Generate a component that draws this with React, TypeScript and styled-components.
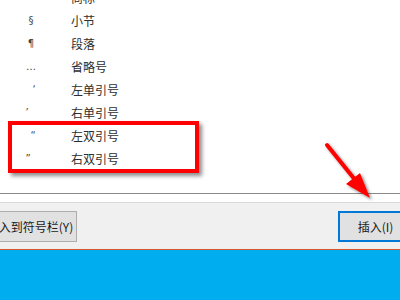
import React from "react";
import styled, { createGlobalStyle } from "styled-components";

const Global = createGlobalStyle`
  html, body { margin: 0; padding: 0; background: #ffffff; }
  body { font-family: "Noto Sans CJK SC", "Noto Sans", sans-serif; }
`;

const Page = styled.div`
  position: relative;
  width: 400px;
  height: 300px;
  overflow: hidden;
  display: flex;
  flex-direction: column;
  background: #ffffff;
`;

const DialogBody = styled.div`
  background: #ffffff;
  padding-bottom: 8px;
`;

const ListPane = styled.div`
  height: 193px;
  overflow: hidden;
  border-bottom: 1px solid #8a8a8a;
`;

const Rows = styled.div`
  margin-top: -14px;
  display: flex;
  flex-direction: column;
`;

const Row = styled.div`
  display: grid;
  grid-template-columns: 62px 1fr;
  column-gap: 9px;
  height: 23px;
  align-items: center;
  font-size: 12px;
  color: #2e2e2e;
`;

const Sym = styled.span<{ $shift: number }>`
  text-align: center;
  font-family: "DejaVu Sans", "Noto Sans", sans-serif;
  font-size: 10px;
  color: #444444;
  transform: translateX(${(p) => p.$shift}px);
`;

const Name = styled.span`
  letter-spacing: 0;
`;

const ButtonBar = styled.div`
  height: 46px;
  border-top: 1px solid #d9d9d9;
  background: #f0f0f0;
  display: flex;
  align-items: center;
  justify-content: space-between;
`;

const Button = styled.button<{ $primary?: boolean; $width: number }>`
  box-sizing: border-box;
  width: ${(p) => p.$width}px;
  flex: none;
  height: 31px;
  margin-top: 1px;
  padding: 0;
  font-family: "Noto Sans CJK SC", "Noto Sans", sans-serif;
  font-size: 12px;
  color: #1a1a1a;
  background: #e1e1e1;
  border: ${(p) => (p.$primary ? "2px solid #0078d7" : "1px solid #adadad")};
  text-align: center;
  white-space: nowrap;
`;

const LeftButton = styled(Button)`
  margin-left: -17px;
`;

const RightButton = styled(Button)`
  margin-right: -13px;
`;

const Taskbar = styled.div`
  flex: 1;
  border-top: 1px solid #d9572c;
  background: #00adef;
`;

const Highlight = styled.div`
  position: absolute;
  left: 8px;
  top: 121px;
  width: 191px;
  height: 52px;
  box-sizing: border-box;
  border: 4px solid #ff0000;
  box-shadow: 3px 3px 4px rgba(0, 0, 0, 0.45);
`;

const ArrowSvg = styled.svg`
  position: absolute;
  left: 0;
  top: 0;
  pointer-events: none;
`;

const items: { sym: string; name: string; shift: number }[] = [
  { sym: "™", name: "商标", shift: 0 },
  { sym: "§", name: "小节", shift: 0 },
  { sym: "¶", name: "段落", shift: 0 },
  { sym: "…", name: "省略号", shift: 0 },
  { sym: "‘", name: "左单引号", shift: 3 },
  { sym: "’", name: "右单引号", shift: -4 },
  { sym: "“", name: "左双引号", shift: 2 },
  { sym: "”", name: "右双引号", shift: -3 },
];

export default function App() {
  return (
    <>
      <Global />
      <Page>
        <DialogBody>
          <ListPane>
            <Rows>
              {items.map((it) => (
                <Row key={it.name}>
                  <Sym $shift={it.shift}>{it.sym}</Sym>
                  <Name>{it.name}</Name>
                </Row>
              ))}
            </Rows>
          </ListPane>
        </DialogBody>
        <ButtonBar>
          <LeftButton $width={94}>插入到符号栏(Y)</LeftButton>
          <RightButton $primary $width={75}>插入(I)</RightButton>
        </ButtonBar>
        <Taskbar />
        <Highlight />
        <ArrowSvg width="400" height="300" viewBox="0 0 400 300">
          <defs>
            <filter id="sh" x="-20%" y="-20%" width="140%" height="140%">
              <feDropShadow dx="2" dy="2" stdDeviation="1.5" floodColor="#000" floodOpacity="0.45" />
            </filter>
          </defs>
          <g filter="url(#sh)">
            <line x1="327" y1="145" x2="356" y2="181" stroke="#ff0000" strokeWidth="4" strokeLinecap="round" />
            <polygon points="370,198 346,184 360,173" fill="#ff0000" />
          </g>
        </ArrowSvg>
      </Page>
    </>
  );
}
